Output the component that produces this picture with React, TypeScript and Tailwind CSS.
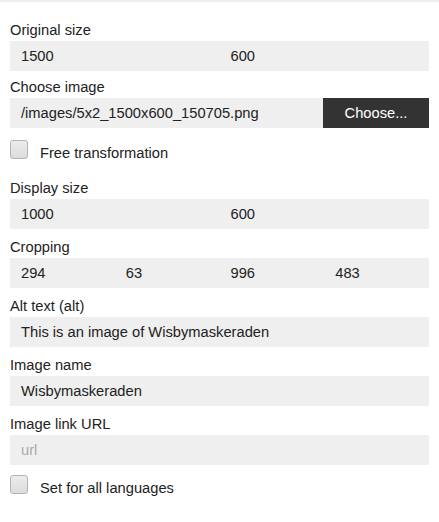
import React from 'react';

type FieldProps = { label: string; children: React.ReactNode; className?: string };

function Field({ label, children, className = '' }: FieldProps) {
  return (
    <div className={className}>
      <div className="mb-[2px] leading-[18px]">{label}</div>
      {children}
    </div>
  );
}

function Cell({ value, muted }: { value: string; muted?: boolean }) {
  return (
    <div className={`h-[30px] truncate pl-[11px] leading-[30px] ${muted ? 'text-[#aaaaaa]' : ''}`}>{value}</div>
  );
}

function Checkbox({ label, className = '' }: { label: string; className?: string }) {
  return (
    <label className={`flex h-[19px] items-start ${className}`}>
      <span className="h-[19px] w-[18px] shrink-0 rounded-[3px] border border-[#b3b3b3] bg-gradient-to-b from-[#ececec] to-[#dcdcdc]" />
      <span className="ml-[12px] mt-[4px] whitespace-nowrap leading-[19px]">{label}</span>
    </label>
  );
}

export default function App() {
  return (
    <div className="min-h-screen bg-white font-['Liberation_Sans',Arial,sans-serif] text-[14.7px] text-[#222222]">
      <div className="h-[2px] bg-[#eeeeee]" />
      <div className="px-[10px] pt-[19px]">
        <Field label="Original size">
          <div className="grid grid-cols-2 bg-[#efefef]">
            <Cell value="1500" />
            <Cell value="600" />
          </div>
        </Field>

        <Field label="Choose image" className="mt-[7px]">
          <div className="flex">
            <div className="flex-1 bg-[#efefef]">
              <Cell value="/images/5x2_1500x600_150705.png" />
            </div>
            <button className="h-[30px] w-[106px] bg-[#333333] text-center leading-[30px] text-white">Choose...</button>
          </div>
        </Field>

        <Checkbox label="Free transformation" className="mt-[12px]" />

        <Field label="Display size" className="mt-[20px]">
          <div className="grid grid-cols-2 bg-[#efefef]">
            <Cell value="1000" />
            <Cell value="600" />
          </div>
        </Field>

        <Field label="Cropping" className="mt-[9px]">
          <div className="grid grid-cols-4 bg-[#efefef]">
            <Cell value="294" />
            <Cell value="63" />
            <Cell value="996" />
            <Cell value="483" />
          </div>
        </Field>

        <Field label="Alt text (alt)" className="mt-[9px]">
          <div className="bg-[#efefef]">
            <Cell value="This is an image of Wisbymaskeraden" />
          </div>
        </Field>

        <Field label="Image name" className="mt-[9px]">
          <div className="bg-[#efefef]">
            <Cell value="Wisbymaskeraden" />
          </div>
        </Field>

        <Field label="Image link URL" className="mt-[9px]">
          <div className="bg-[#efefef]">
            <Cell value="url" muted />
          </div>
        </Field>

        <Checkbox label="Set for all languages" className="mt-[10px]" />
      </div>
    </div>
  );
}
